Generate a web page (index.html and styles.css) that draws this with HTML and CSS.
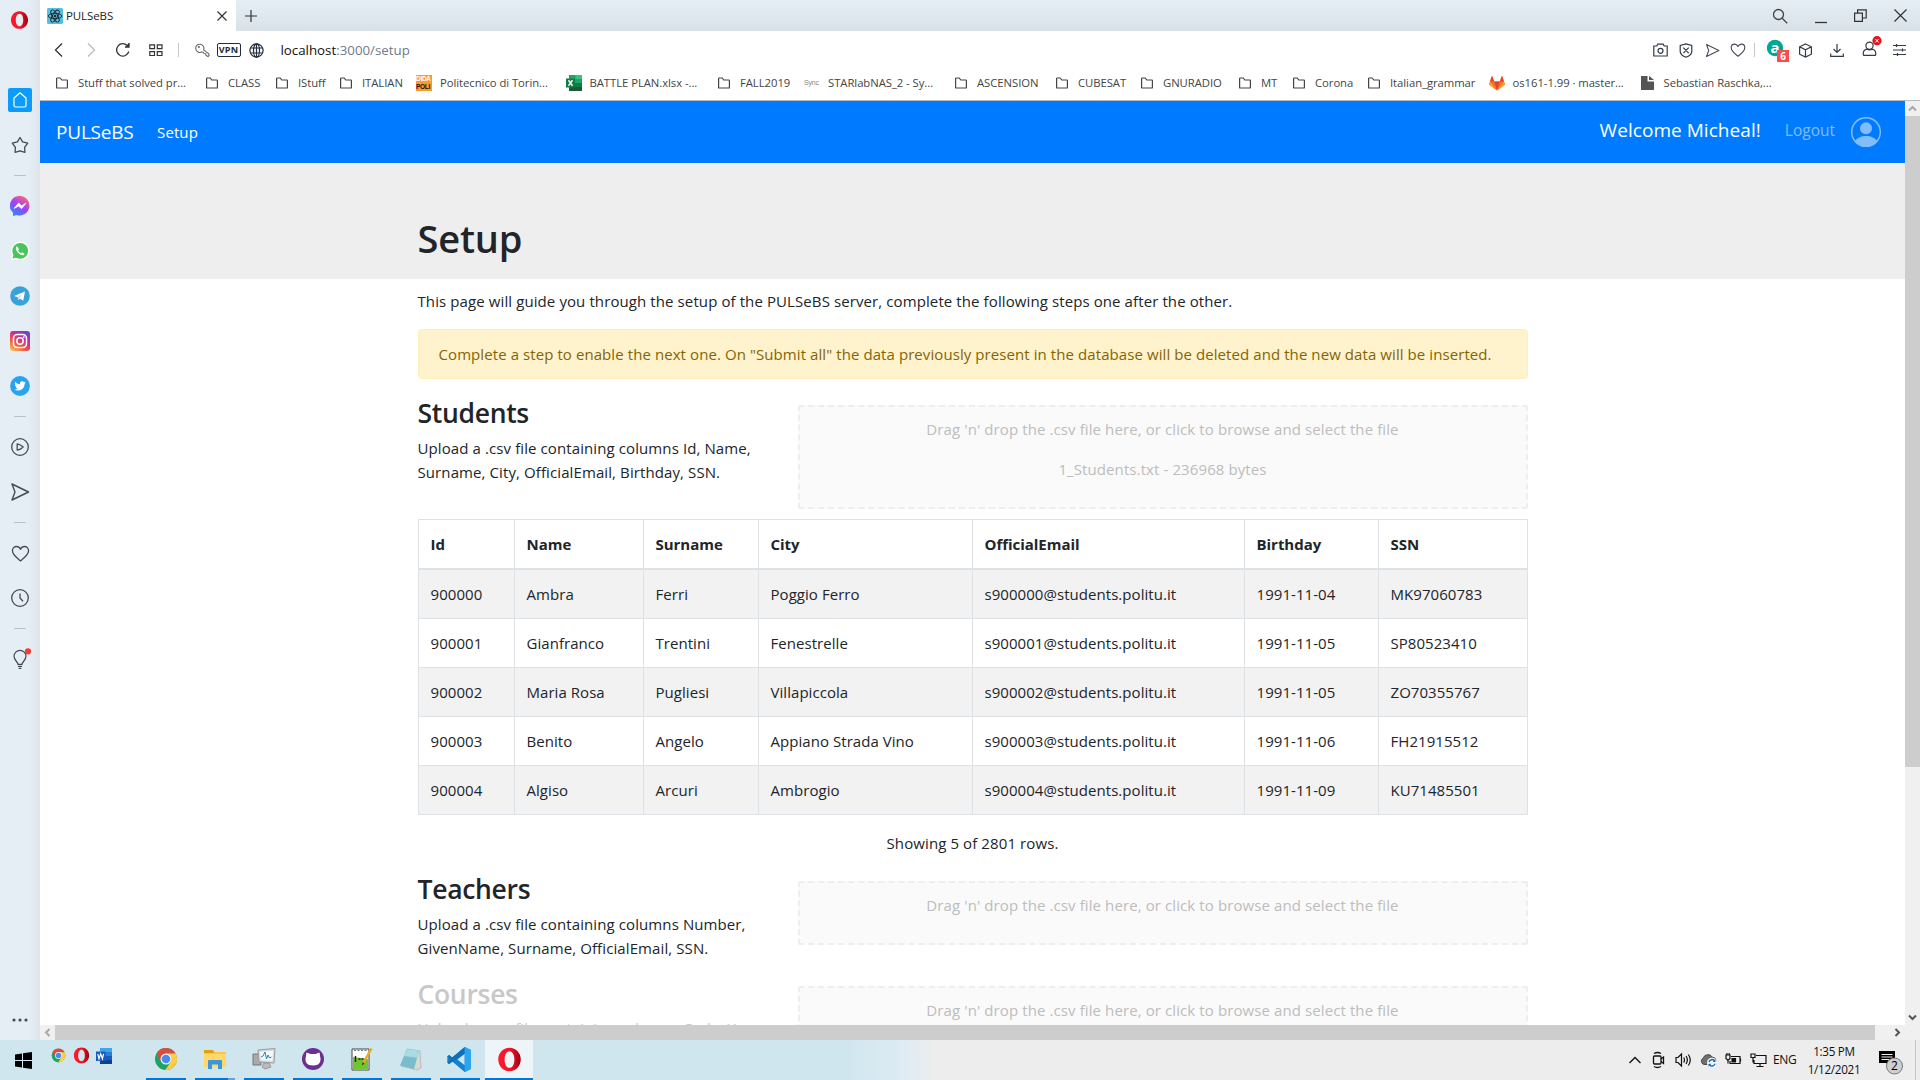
FILE: index.html
```
<!DOCTYPE html>
<html lang="en">
<head>
<meta charset="utf-8">
<title>PULSeBS</title>
<link rel="stylesheet" href="styles.css">
</head>
<body>
<svg class="defs" width="0" height="0">
  <symbol id="folder" viewBox="0 0 12 12"><path d="M.6 10.4V1.6q0-.6.6-.6h3l1.6 2h5q.6 0 .6.6v6.8q0 .6-.6.6H1.2q-.6 0-.6-.6z" fill="none" stroke="#444" stroke-width="1.2"/></symbol>
  <symbol id="chrome" viewBox="0 0 24 24"><circle cx="12" cy="12" r="11" fill="#1da462"/><path d="M12 12 2.5 6.4A11 11 0 0 1 21.6 6.6H12z" fill="#db4b3f"/><path d="M12 6.6h9.6A11 11 0 0 1 11.3 23L17 14.5z" fill="#ffcd45"/><path d="M2.5 6.4 7.2 14.6 12 12V6.6z" fill="#db4b3f"/><circle cx="12" cy="12" r="5.5" fill="#f4f4f4"/><circle cx="12" cy="12" r="4.3" fill="#4a8af4"/></symbol>
  <symbol id="opera" viewBox="0 0 24 24"><defs><linearGradient id="og" x1="0" x2="1"><stop offset="0" stop-color="#ff1b2d"/><stop offset=".55" stop-color="#f01428"/><stop offset="1" stop-color="#9c0010"/></linearGradient></defs><path fill="url(#og)" fill-rule="evenodd" d="M12 .8C5.800.8 1.200 5.800 1.200 12S5.800 23.200 12 23.200 22.800 18.200 22.800 12 18.200.8 12 .8zM12 4c3 0 4.700 3.600 4.700 8s-1.700 8-4.700 8-4.700-3.600-4.700-8S9 4 12 4z"/></symbol>
  <symbol id="send" viewBox="0 0 20 20"><path d="M2 2 18.500 10 2 18l3-8z" fill="none" stroke="#444b57" stroke-width="1.400" stroke-linejoin="round"/></symbol>
  <symbol id="heart" viewBox="0 0 20 20"><path d="M10 17.800C5 14 1.500 11 1.500 7.200 1.500 4.400 3.500 2.600 5.700 2.600c2 0 3.500 1.200 4.300 3 .8-1.800 2.300-3 4.300-3 2.200 0 4.200 1.800 4.200 4.600 0 3.800-3.500 6.800-8.500 10.600z" fill="none" stroke="#444b57" stroke-width="1.400" stroke-linejoin="round"/></symbol>
</svg>
<div class="screen">
  <div class="browser">
    <aside class="sidebar">
      <div class="slot logo"><svg width="19" height="20"><use href="#opera"/></svg></div>
      <div class="slot"><span class="home"><svg width="16" height="18" viewBox="0 0 16 18" fill="none" stroke="#fff" stroke-width="1.200"><path d="M2 7 8 1.800 14 7v7.500q0 1.500-1.500 1.500h-9Q2 16 2 14.500z" stroke-linejoin="round"/></svg></span></div>
      <div class="slot"><svg width="18" height="18" viewBox="0 0 18 18" fill="none" stroke="#444b57" stroke-width="1.300" stroke-linejoin="round"><path d="M9 1.500 11.600 5.800 16.700 7.100 13.600 11.300 13.900 16.300 9 14.800 4.100 16.300 4.400 11.300 1.300 7.100 6.400 5.800z"/></svg></div>
      <hr>
      <div class="slot"><svg width="20" height="20" viewBox="0 0 20 20"><defs><linearGradient id="ms" x1=".2" y1="1" x2=".8" y2="0"><stop offset="0" stop-color="#2090ff"/><stop offset=".5" stop-color="#a040fd"/><stop offset="1" stop-color="#ff6a68"/></linearGradient></defs><path d="M10 0a9.700 9.700 0 1 1-3.300 18.900L3 20v-3.200A9.700 9.700 0 0 1 10 0z" fill="url(#ms)"/><path d="M4.300 12.300 8.500 7.200l3.200 2.700 4-2.500-4.200 5.200-3-2.600z" fill="#fff" stroke="#fff"/></svg></div>
      <div class="slot"><svg width="20" height="20" viewBox="0 0 20 20"><path d="M1 19.300 2.400 14.500A9.200 9.200 0 1 1 6 18z" fill="#fff"/><circle cx="10.200" cy="9.800" r="7.900" fill="#48c65a"/><path d="M2.500 17.600 3.800 13l3.400 3.400z" fill="#48c65a"/><path d="M7 5.300c-2 1.200-1.200 4.400 1.400 6.700 2.700 2.600 5.400 2.900 6.200.9l-2.300-1.700-1.200 1.100c-1.400-.6-2.500-1.700-3-2.900l1-1.200z" fill="#fff"/></svg></div>
      <div class="slot"><svg width="20" height="20" viewBox="0 0 20 20"><circle cx="10" cy="10" r="9.800" fill="#38a3d9"/><path d="M4 9.900 15 5.500 13.200 14.800 9.900 12.500 8.200 14.200 7.700 11.300z" fill="#fff"/><path d="m7.700 11.300 5-3.800-3.600 4.500-.9 2.200z" fill="#b8d8ea"/></svg></div>
      <div class="slot"><svg width="20" height="20" viewBox="0 0 20 20"><defs><linearGradient id="ig" x1=".1" y1="1" x2=".8" y2="0"><stop offset="0" stop-color="#fec053"/><stop offset=".35" stop-color="#f2573f"/><stop offset=".65" stop-color="#c5309a"/><stop offset="1" stop-color="#6a45d0"/></linearGradient></defs><rect width="20" height="20" rx="3" fill="url(#ig)"/><rect x="3.500" y="3.500" width="13" height="13" rx="3.800" fill="none" stroke="#fff" stroke-width="1.500"/><circle cx="10" cy="10" r="3.200" fill="none" stroke="#fff" stroke-width="1.500"/><circle cx="13.800" cy="6.200" r=".9" fill="#fff"/></svg></div>
      <div class="slot"><svg width="20" height="20" viewBox="0 0 20 20"><circle cx="10" cy="10" r="9.900" fill="#2aa3ef"/><path d="M15.800 6.500c-.4.200-.8.300-1.300.4.500-.3.800-.7 1-1.300l-1.500.6a2.300 2.300 0 0 0-4 2.100C8.100 8.200 6.300 7.200 5.200 5.800c-.6 1-.3 2.400.7 3.100l-1-.3c0 1.100.7 2 1.800 2.300l-1 .1c.3.900 1.100 1.500 2.100 1.600-1 .8-2.200 1-3.400 1 4.600 2.600 10.200-.2 10.200-5.800.5-.4.900-.8 1.200-1.300z" fill="#fff"/></svg></div>
      <hr>
      <div class="slot"><svg width="20" height="20" viewBox="0 0 20 20" fill="none" stroke="#444b57" stroke-width="1.300"><circle cx="10" cy="10" r="8.300"/><path d="M7.200 6.800q3.300.6 6 3.200-2.700 2.600-6 3.200z" stroke-linejoin="round"/></svg></div>
      <div class="slot"><svg width="20" height="20"><use href="#send"/></svg></div>
      <hr>
      <div class="slot"><svg width="19" height="19"><use href="#heart"/></svg></div>
      <div class="slot"><svg width="20" height="20" viewBox="0 0 20 20" fill="none" stroke="#444b57" stroke-width="1.300"><circle cx="10" cy="10" r="8.300"/><path d="M10 5.500V10l3 3.300"/></svg></div>
      <hr>
      <div class="slot"><svg width="24" height="22" viewBox="0 0 24 22"><g fill="none" stroke="#444b57" stroke-width="1.200"><path d="M10 16.300c0-2.200-4-4-4-8a6 6 0 0 1 12 0c0 4-4 5.800-4 8z"/><path d="M10 18.300h4M10.700 20.300h2.600"/></g><circle cx="20" cy="3.300" r="3.100" fill="#fc3a30"/></svg></div>
      <div class="slot more"><svg width="16" height="4" viewBox="0 0 16 4" fill="#444b57"><circle cx="2" cy="2" r="1.600"/><circle cx="8" cy="2" r="1.600"/><circle cx="14" cy="2" r="1.600"/></svg></div>
    </aside>
    <div class="window">
      <div class="tabs">
        <div class="tab">
          <svg width="16" height="16" viewBox="0 0 16 16"><rect width="16" height="16" rx="1.500" fill="#53c1de"/><g fill="none" stroke="#20232a" stroke-width=".9"><ellipse cx="8" cy="8" rx="6.800" ry="2.600"/><ellipse cx="8" cy="8" rx="6.800" ry="2.600" transform="rotate(60 8 8)"/><ellipse cx="8" cy="8" rx="6.800" ry="2.600" transform="rotate(120 8 8)"/></g><circle cx="8" cy="8" r="1.300" fill="#20232a"/></svg>
          <span class="tab-title">PULSeBS</span>
          <svg width="10" height="10" viewBox="0 0 10 10" stroke="#333" stroke-width="1.200"><path d="m.5.5 9 9m0-9-9 9"/></svg>
        </div>
        <svg class="plus" width="12" height="12" viewBox="0 0 12 12" stroke="#333" stroke-width="1.200"><path d="M6 0v12M0 6h12"/></svg>
        <div class="controls">
          <svg width="16" height="16" viewBox="0 0 16 16" fill="none" stroke="#444" stroke-width="1.300"><circle cx="6.500" cy="6.500" r="5"/><path d="m10.200 10.200 5 5"/></svg>
          <svg width="12" height="16" viewBox="0 0 12 16"><path d="M0 14.500h12" stroke="#333" stroke-width="1.300"/></svg>
          <svg width="13" height="13" viewBox="0 0 13 13" fill="none" stroke="#333" stroke-width="1.200"><path d="M.6 4.100h7.800v8.300H.6zM3.600 4V.8h8.600v8.200H8.500"/></svg>
          <svg width="13" height="13" viewBox="0 0 13 13" stroke="#333" stroke-width="1.200"><path d="m.5.5 12 12m0-12-12 12"/></svg>
        </div>
      </div>
      <div class="address">
        <div class="nav-icons">
          <svg width="14" height="16" viewBox="0 0 14 16" fill="none" stroke="#333" stroke-width="1.300"><path d="M10 1.500 3.500 8l6.500 6.500"/></svg>
          <svg width="14" height="16" viewBox="0 0 14 16" fill="none" stroke="#bbb" stroke-width="1.300"><path d="M4 1.500 10.500 8 4 14.500"/></svg>
          <svg width="16" height="16" viewBox="0 0 16 16" fill="none" stroke="#333" stroke-width="1.300"><path d="M13.800 9.500a6.200 6.200 0 1 1-1.600-6M14 1v4h-4"/><path d="m10.500 4.500 3.500.5V1z" fill="#333" stroke="none"/></svg>
          <svg width="14" height="14" viewBox="0 0 14 14" fill="none" stroke="#333" stroke-width="1.200"><path d="M.8 1.800h4.700v3.900H.8zM8.300 1.800H13v3.900H8.300zM.8 8.600h4.700v3.900H.8zM8.300 8.600H13v3.900H8.300z"/></svg>
        </div>
        <i class="bar"></i>
        <svg class="key" width="15" height="15" viewBox="0 0 15 15" fill="none" stroke="#666" stroke-width="1.100"><path d="M8.600 6.900A4.100 4.100 0 1 0 6.600 9l1.500.2 1 1.300 1.500.3.500 1.500 1.900 1.300 1.100-1.100-.3-1.600z"/><circle cx="3.900" cy="4" r=".5"/></svg>
        <span class="vpn">VPN</span>
        <svg class="globe" width="15" height="15" viewBox="0 0 15 15" fill="none" stroke="#222c3c" stroke-width="1.200"><circle cx="7.500" cy="7.500" r="6.600"/><ellipse cx="7.500" cy="7.500" rx="3" ry="6.600"/><path d="M1.500 5h12M1.500 10h12M7.500 1v13"/></svg>
        <span class="url">localhost<em>:3000/setup</em></span>
        <div class="tools">
          <svg width="15" height="14" viewBox="0 0 15 14" fill="none" stroke="#333b47" stroke-width="1.200"><path d="M.8 3h3l1-1.800h5.400l1 1.800h3v10H.8z"/><circle cx="7.500" cy="7.800" r="2.500"/></svg>
          <svg width="14" height="15" viewBox="0 0 14 15" fill="none" stroke="#333b47" stroke-width="1.200"><path d="m7 .8 5.800 1.700v6.300Q12 12.500 7 14.200 2 12.500 1.200 8.800V2.500zM4.300 4.700l5.400 5.400M9.700 4.700l-5.400 5.400"/></svg>
          <svg width="15" height="15"><use href="#send"/></svg>
          <svg width="16" height="16"><use href="#heart"/></svg>
          <i class="bar"></i>
          <svg class="ext" width="24" height="26" viewBox="0 0 24 26"><circle cx="9" cy="11" r="8.200" fill="#00a698"/><text x="9" y="16" text-anchor="middle" class="amz">a</text><rect x="11" y="13" width="12" height="12" fill="#ff4b4b"/><text x="17" y="22.500" text-anchor="middle" class="cnt">6</text></svg>
          <svg width="15" height="15" viewBox="0 0 15 15" fill="none" stroke="#333b47" stroke-width="1.200"><path d="m7.500 1 5.900 2.800v7.400l-5.900 2.900-5.900-2.900V3.800zM1.600 3.800l5.900 3 5.900-3M7.500 6.800V14"/></svg>
          <svg width="14" height="14" viewBox="0 0 14 14" fill="none" stroke="#333b47" stroke-width="1.200"><path d="M7 1v8.500M3.500 6 7 9.500 10.500 6M.7 10.500v2.800h12.600v-2.800"/></svg>
          <svg class="person" width="22" height="24" viewBox="0 0 22 24" fill="none" stroke="#333b47" stroke-width="1.200"><circle cx="9.500" cy="9.800" r="3.600"/><path d="M3.300 18.800v-1.500q0-3.300 3.500-4.200 2.700 1.400 5.400 0 3.500.9 3.500 4.200v1.500q0 .6-.7.600H4q-.7 0-.7-.6z"/><circle cx="17" cy="4.700" r="4.600" fill="#e0131e" stroke="none"/><path d="m15.200 2.900 3.600 3.600m0-3.600-3.600 3.600" stroke="#fff" stroke-width="1"/></svg>
          <svg width="13" height="12" viewBox="0 0 13 12" stroke="#333b47" stroke-width="1.200"><path d="M0 1.500h13M0 6h13M0 10.500h13M3.500 0v3M9.500 4.500v3M4.500 9v3"/></svg>
        </div>
      </div>
      <div class="bookmarks">
        <span><svg><use href="#folder"/></svg><b>Stuff that solved pr...</b></span>
        <span><svg><use href="#folder"/></svg><b>CLASS</b></span>
        <span><svg><use href="#folder"/></svg><b>IStuff</b></span>
        <span><svg><use href="#folder"/></svg><b>ITALIAN</b></span>
        <span class="site"><i class="poli"><s>DIDA</s><u>POLI</u></i><b>Politecnico di Torin...</b></span>
        <span class="site"><svg viewBox="0 0 16 16"><path d="M3 0h13v16H3z" fill="#21a366"/><path d="M9.500 0H16v4H9.500z" fill="#33c481"/><path d="M3 8h13v8H3z" fill="#107c41"/><path d="M3 12h13v4H3z" fill="#185c37"/><path d="M0 3.500h9v9H0z" fill="#107c41"/><path d="m2.500 5.300 4 5.400M6.500 5.300l-4 5.400" stroke="#fff" stroke-width="1.500"/></svg><b>BATTLE PLAN.xlsx -...</b></span>
        <span><svg><use href="#folder"/></svg><b>FALL2019</b></span>
        <span class="site"><i class="sync">Sync</i><b>STARlabNAS_2 - Sy...</b></span>
        <span><svg><use href="#folder"/></svg><b>ASCENSION</b></span>
        <span><svg><use href="#folder"/></svg><b>CUBESAT</b></span>
        <span><svg><use href="#folder"/></svg><b>GNURADIO</b></span>
        <span><svg><use href="#folder"/></svg><b>MT</b></span>
        <span><svg><use href="#folder"/></svg><b>Corona</b></span>
        <span><svg><use href="#folder"/></svg><b>Italian_grammar</b></span>
        <span class="site"><svg viewBox="0 0 16 16"><path d="M8 15.500 0 9.500 3 .8l2.200 5.700h5.600L13 .8l3 8.700z" fill="#fc6d26"/><path d="M8 15.500 5.200 6.500h5.600z" fill="#e24329"/><path d="M3 .8 5.200 6.500H1zM13 .8l-2.200 5.700H15z" fill="#e24329"/><path d="m0 9.500 1-3 7 9zM16 9.500l-1-3-7 9z" fill="#fca326"/></svg><b>os161-1.99 · master...</b></span>
        <span class="site"><svg viewBox="0 0 16 16"><path d="M1 1h6.500v5.500H14V15H1z" fill="#555"/><path d="M9 .8 14 5H9z" fill="#555"/></svg><b>Sebastian Raschka,...</b></span>
      </div>
      <div class="viewport">
        <main class="page">
          <nav class="navbar">
            <span class="brand">PULSeBS</span>
            <span class="link">Setup</span>
            <span class="welcome">Welcome Micheal!</span>
            <span class="logout">Logout</span>
            <svg width="30" height="30" viewBox="0 0 30 30"><circle cx="15" cy="15" r="14.300" fill="none" stroke="#80bdff" stroke-width="1.500"/><circle cx="15" cy="11.300" r="6" fill="#80bdff"/><path d="M3.500 24.500C5.500 21 10 19 15 19s9.500 2 11.500 5.500C24 28 20 30 15 30S6 28 3.500 24.500z" fill="#80bdff"/></svg>
          </nav>
          <header class="jumbotron"><h1>Setup</h1></header>
          <div class="container">
            <p class="intro">This page will guide you through the setup of the PULSeBS server, complete the following steps one after the other.</p>
            <div class="alert">Complete a step to enable the next one. On "Submit all" the data previously present in the database will be deleted and the new data will be inserted.</div>
            <section class="step">
              <div class="info"><h3>Students</h3><p>Upload a .csv file containing columns Id, Name,<br>Surname, City, OfficialEmail, Birthday, SSN.</p></div>
              <div class="drop"><p>Drag 'n' drop the .csv file here, or click to browse and select the file</p><p class="file">1_Students.txt - 236968 bytes</p></div>
            </section>
            <table>
              <colgroup><col class="c1"><col class="c2"><col class="c3"><col class="c4"><col class="c5"><col class="c6"><col class="c7"></colgroup>
              <thead><tr><th>Id</th><th>Name</th><th>Surname</th><th>City</th><th>OfficialEmail</th><th>Birthday</th><th>SSN</th></tr></thead>
              <tbody>
                <tr><td>900000</td><td>Ambra</td><td>Ferri</td><td>Poggio Ferro</td><td>s900000@students.politu.it</td><td>1991-11-04</td><td>MK97060783</td></tr>
                <tr><td>900001</td><td>Gianfranco</td><td>Trentini</td><td>Fenestrelle</td><td>s900001@students.politu.it</td><td>1991-11-05</td><td>SP80523410</td></tr>
                <tr><td>900002</td><td>Maria Rosa</td><td>Pugliesi</td><td>Villapiccola</td><td>s900002@students.politu.it</td><td>1991-11-05</td><td>ZO70355767</td></tr>
                <tr><td>900003</td><td>Benito</td><td>Angelo</td><td>Appiano Strada Vino</td><td>s900003@students.politu.it</td><td>1991-11-06</td><td>FH21915512</td></tr>
                <tr><td>900004</td><td>Algiso</td><td>Arcuri</td><td>Ambrogio</td><td>s900004@students.politu.it</td><td>1991-11-09</td><td>KU71485501</td></tr>
              </tbody>
            </table>
            <p class="count">Showing 5 of 2801 rows.</p>
            <section class="step">
              <div class="info"><h3>Teachers</h3><p>Upload a .csv file containing columns Number,<br>GivenName, Surname, OfficialEmail, SSN.</p></div>
              <div class="drop"><p>Drag 'n' drop the .csv file here, or click to browse and select the file</p></div>
            </section>
            <section class="step disabled">
              <div class="info"><h3>Courses</h3><p>Upload a .csv file containing columns Code, Year,</p></div>
              <div class="drop"><p>Drag 'n' drop the .csv file here, or click to browse and select the file</p></div>
            </section>
          </div>
        </main>
        <div class="vscroll">
          <svg width="9" height="7" viewBox="0 0 9 7" fill="none" stroke="#a8a8a8" stroke-width="2"><path d="m1 5.500 3.500-3.500L8 5.500"/></svg>
          <i></i>
          <svg class="down" width="9" height="7" viewBox="0 0 9 7" fill="none" stroke="#555" stroke-width="2"><path d="m1 1.500 3.500 3.500L8 1.500"/></svg>
        </div>
        <div class="hscroll">
          <svg width="15" height="9" viewBox="0 0 15 9" fill="none" stroke="#a8a8a8" stroke-width="2"><path d="M9.500 1 6 4.500 9.500 8"/></svg>
          <i></i>
          <svg class="right" width="7" height="9" viewBox="0 0 7 9" fill="none" stroke="#555" stroke-width="2"><path d="M1.500 1 5 4.500 1.500 8"/></svg>
        </div>
        <div class="corner"></div>
      </div>
    </div>
  </div>
  <footer class="taskbar">
    <div class="start"><svg width="17" height="17" viewBox="0 0 17 17"><path d="M0 2.500 7 1.500v6.500H0zM8 1.300 17 0v8H8zM0 9h7v6.500l-7-1zM8 9h9v8l-9-1.300z"/></svg></div>
    <div class="quick">
      <svg width="15" height="15"><use href="#chrome"/></svg>
      <svg width="17" height="17"><use href="#opera"/></svg>
      <svg width="16" height="16" viewBox="0 0 16 16"><path d="M4 0h12v16H4z" fill="#2b7cd3"/><path d="M4 0h12v4H4z" fill="#41a5ee"/><path d="M4 8h12v4H4z" fill="#185abd"/><path d="M4 12h12v4H4z" fill="#103f91"/><path d="M0 3.500h9.500v9.500H0z" fill="#185abd"/><path d="m1.800 5.800 1.200 5 1.700-5 1.700 5 1.200-5" fill="none" stroke="#fff" stroke-width="1.200"/></svg>
    </div>
    <div class="apps">
      <div><svg width="24" height="24"><use href="#chrome"/></svg></div>
      <div class="multi"><svg width="24" height="24" viewBox="0 0 24 24"><path d="M1 3h9l2 2h11v15H1z" fill="#f9c64b"/><path d="M1 3h9l1 3H1z" fill="#dfa012"/><path d="M1 7h22v13H1z" fill="#ffd869"/><path d="M5 22v-8q0-1 1-1h12q1 0 1 1v8h-4v-4.500H9V22z" fill="#3a96dd"/></svg></div>
      <div><svg width="24" height="24" viewBox="0 0 24 24"><path d="M1 7h8v11H1z" fill="#aaa" stroke="#777"/><path d="M6 3 23 1.500 22 16 7 15z" fill="#d9dcdf" stroke="#999"/><path d="m8 5 13-1.200-.7 10L9 13z" fill="#f6fbff"/><path d="m9 10 2-1 2-4 1.500 7L16 8l1.500 3 2-1" fill="none" stroke="#2c83b8"/><path d="M12 16h5l2 4-6 2-3-2z" fill="#bbb" stroke="#999"/></svg></div>
      <div><svg width="24" height="24" viewBox="0 0 24 24"><circle cx="12" cy="12" r="11" fill="#6b2e91"/><path d="M5.500 5.500 9.500 7h5l4-1.500.6 4q1 2.500 0 5.500-1.600 3.500-7.100 3.500T4.900 15q-1-3 0-5.500z" fill="#fff"/></svg></div>
      <div><svg width="24" height="24" viewBox="0 0 24 24"><path d="M2 2h17v21H2z" fill="#fff" stroke="#444"/><path d="M3 10 18 12v10H3z" fill="#70c62f"/><path d="M4 3.500h2m1.500 0h2m1.500 0h2m1.500 0h2" stroke="#777" stroke-width="1"/><path d="M5.500 9v6m3-3h2m1 0h2" stroke="#222" stroke-width="1.500"/><path d="m21.500 1.500-8.500 15" stroke="#e9a92c" stroke-width="2.500"/><path d="m12.500 15-.5 3.500 2.500-2z" fill="#333"/></svg></div>
      <div><svg width="24" height="24" viewBox="0 0 24 24"><path d="m8 2 13 2 1 17-4 2L2 19z" fill="#d9d9cf" stroke="#aaa" stroke-width=".7"/><path d="m8 2 12 1.800L15 22 1 18.500z" fill="#79bccb"/><path d="m8 2 12 1.800-2 7L5 9z" fill="#a9dbe3"/></svg></div>
      <div><svg width="25" height="25" viewBox="0 0 24 24"><path d="m17 0 6 2.800v18.400L17 24 5 14l-3 2.300L.3 15V9L2 7.700 5 10zM17 6.500 10 12l7 5.500z" fill="#1481cf" fill-rule="evenodd"/><path d="m.3 9 3.200 3L.3 15l1.700 1.300L17 6.500V0L5 10 2 7.700z" fill="#0f70b8"/><path d="m17 0 6 2.800v18.400L17 24z" fill="#29a6f2"/></svg></div>
      <div class="active"><svg width="25" height="25"><use href="#opera"/></svg></div>
    </div>
    <div class="tray">
      <svg width="14" height="14" viewBox="0 0 14 14" fill="none" stroke="#111" stroke-width="1.300"><path d="m1.500 10 5.500-5.500L12.500 10"/></svg>
      <svg width="14" height="18" viewBox="0 0 14 18" fill="none" stroke="#111" stroke-width="1.300"><rect x="2" y="5" width="7.500" height="8" rx="1"/><path d="m9.500 8 2.500-2v6.500l-2.500-2M2.500 2.500Q6 .5 9.500 2.500M2.500 15.500q3.500 2 7 0"/></svg>
      <svg width="17" height="16" viewBox="0 0 17 16" fill="none" stroke="#111" stroke-width="1.200"><path d="M1 5.500h2L6.500 2v12L3 10.500H1zM8.700 5.500q1.600 2.500 0 5M11 4q2.800 4 0 8M13.300 2.500q4 5.500 0 11"/></svg>
      <svg width="17" height="16" viewBox="0 0 17 16"><path d="M4 12.500a3.500 3.500 0 0 1-.8-6.500 5 5 0 0 1 9-1q3.500.3 4 4v3.500z" fill="#6e6e6e" stroke="#333" stroke-width=".8"/><circle cx="12" cy="10.800" r="5" fill="#fff"/><path d="M9 10a3.200 3.200 0 0 1 5.500-1.300M15 11.600a3.200 3.200 0 0 1-5.500 1.300" fill="none" stroke="#1466c4" stroke-width="1.500"/><path d="M15.500 7v3h-3zM8.500 14.700v-3h3z" fill="#1466c4"/></svg>
      <svg width="17" height="16" viewBox="0 0 17 16" fill="none" stroke="#111" stroke-width="1.200"><path d="M6 4.500h9v7H5V9M15.500 6.500v3M1 3h4v3.500L3 8.500 1 6.500zM2 1v2M4.200 1v2M3 8.500v3"/><path d="M7 6.500h3.500v3.500H7z" fill="#111"/></svg>
      <svg width="17" height="16" viewBox="0 0 17 16" fill="none" stroke="#111" stroke-width="1.200"><path d="M6 3.500h10v8H4V8M10 11.500v3M6.500 14.500h7M1 2h4v3.500H1zM3 5.500v5"/></svg>
      <span class="lang">ENG</span>
      <span class="clock">1:35 PM<br>1/12/2021</span>
      <svg class="notif" width="26" height="26" viewBox="0 0 26 26"><path d="M1 2h16v12h-5v4l-4-4H1z" fill="#000"/><path d="M3.500 5.500h11M3.500 8h11M3.500 10.500h8" stroke="#eee" stroke-width="1.200"/><circle cx="16.500" cy="17" r="8" fill="#cfcfcf" stroke="#777"/><text x="16.500" y="21" text-anchor="middle">2</text></svg>
      <i class="peek"></i>
    </div>
  </footer>
</div>
</body>
</html>
```
FILE: styles.css
```
* { box-sizing: border-box; }
body { margin: 0; font-family: "Open Sans", "Noto Sans", sans-serif; font-size: 15px; line-height: 24px; color: #212529; background: #fff; }
svg { display: block; flex: none; }
.defs { position: absolute; }
i, em { font-style: normal; }
.screen { width: 1920px; height: 1080px; display: flex; flex-direction: column; overflow: hidden; }
.browser { height: 1040px; display: flex; }

.sidebar { width: 40px; flex: none; display: flex; flex-direction: column; align-items: center; background: linear-gradient(90deg, #e5edf5 70%, #dde4ec); }
.slot { height: 45px; flex: none; display: flex; align-items: center; justify-content: center; }
.slot.logo { height: 39px; margin: 0 1px 38.500px 0; }
.slot.more { margin-top: auto; height: 40px; }
.sidebar hr { width: 12px; height: 1px; border: 0; background: #b3c3d0; margin: 7.500px 0; flex: none; }
.home { width: 24px; height: 24px; border-radius: 2px; background: #0a9bfb; display: flex; align-items: center; justify-content: center; }

.window { flex: 1; min-width: 0; display: flex; flex-direction: column; }
.tabs { height: 31px; display: flex; align-items: center; background: linear-gradient(#e5edf5, #d9e1e9); }
.tab { width: 196px; height: 31px; padding: 0 9px 0 7px; display: flex; align-items: center; background: #fff; font-size: 11.500px; color: #222; }
.tab-title { flex: 1; margin-left: 3px; letter-spacing: -.1px; }
.plus { margin-left: 9px; }
.controls { margin-left: auto; margin-right: 13px; display: flex; align-items: center; gap: 27px; }
.address { height: 38px; display: flex; align-items: center; }
.nav-icons { display: flex; align-items: center; gap: 17.500px; margin-left: 12px; }
.bar { width: 1px; height: 14px; background: #c8c8c8; }
.nav-icons + .bar { margin-left: 15px; }
.key { margin-left: 16px; }
.vpn { width: 24px; height: 14px; margin-left: 7px; border: 1px solid #222c3c; border-radius: 2px; font: bold 9px/12px "Open Sans", sans-serif; text-align: center; letter-spacing: .3px; color: #222c3c; }
.globe { margin-left: 8px; }
.url { margin-left: 17px; font-size: 13.300px; color: #111; }
.url em { color: #6f7b88; }
.tools { margin-left: auto; margin-right: 5px; display: grid; grid-template-columns: 26px 26px 26px 26px 7px 32px 30px 34px 30px 31px; align-items: center; justify-items: center; }
.ext { margin-left: 8px; }
.amz { font: bold 15px "Open Sans", sans-serif; fill: #fff; }
.cnt { font: bold 10px "Open Sans", sans-serif; fill: #fff; }
.person { margin: -4px 0 0 3px; }
.bookmarks { height: 32px; padding: 0 0 4px 16px; border-bottom: 1px solid #b5bcc4; display: grid; grid-template-columns: 150px 70px 64px 74px 149.500px 154.500px 84px 153px 101px 85px 98px 54px 75px 118.500px 151px 140px; align-items: center; font-size: 11.300px; letter-spacing: -.05px; color: #444; }
.bookmarks span { display: flex; align-items: center; white-space: nowrap; }
.bookmarks b { font-weight: 400; margin-left: 10px; }
.bookmarks svg { width: 12px; height: 12px; }
.bookmarks .site svg { width: 16px; height: 16px; }
.bookmarks .site { margin-left: 2px; }
.bookmarks .site b { margin-left: 8px; }
.poli { width: 16px; height: 16px; overflow: hidden; background: #fb9a2e; font: bold 6.500px/8px "Liberation Sans", sans-serif; letter-spacing: -.3px; }
.poli s, .poli u { display: block; text-decoration: none; color: #fff; }
.poli u { color: #111; }
.sync { width: 16px; font: 7px/16px "Liberation Sans", sans-serif; color: #888; letter-spacing: -.2px; }

.viewport { height: 939px; display: grid; grid-template: 924px 15px / 1865px 15px; }
.page { overflow: hidden; }
.navbar { height: 62px; padding: 0 24px 0 16px; display: flex; align-items: center; background: #007bff; color: #fff; }
.brand { font-size: 19px; letter-spacing: -.2px; }
.link { margin-left: 23.500px; letter-spacing: .1px; }
.welcome { margin-left: auto; font-size: 19px; letter-spacing: .05px; margin-top: -4px; }
.logout { margin: -5px 16px 0 24px; font-size: 15.500px; color: #80bdff; }
.jumbotron { height: 116px; padding: 51px 0 0 377.500px; background: #eee; }
h1, h3, p { margin: 0; }
h1 { font-size: 38px; line-height: 48px; font-weight: 600; letter-spacing: -.2px; }
.container { width: 1110px; margin: 10px auto 0; letter-spacing: .1px; }
.alert { height: 50px; margin: 16px 0; padding: 12px 20px; border: 1px solid #ffeeba; border-radius: 4px; background: #fff3cd; color: #856404; white-space: nowrap; letter-spacing: .08px; }
.step { display: flex; justify-content: space-between; align-items: flex-start; }
.info { white-space: nowrap; width: 350px; }
.info p { margin-bottom: 16px; }
h3 { font-size: 26.500px; line-height: 37px; font-weight: 600; letter-spacing: -.3px; margin-bottom: 3.600px; }
.drop { width: 730px; margin: 10px 0; padding: 10px; border: 2px dashed #eee; border-radius: 2px; background: #fafafa; color: #bdbdbd; text-align: center; }
.step:not(:first-of-type) .drop { margin-bottom: 0; }
.drop p { margin-bottom: 16px; }
.disabled { color: #c8c8c8; }
table { width: 1110.500px; table-layout: fixed; border-collapse: collapse; border: 1px solid #dee2e6; margin-bottom: 16px; letter-spacing: .05px; }
.c1 { width: 96px; } .c2 { width: 129px; } .c3 { width: 115px; } .c4 { width: 214px; } .c5 { width: 272px; } .c6 { width: 134px; }
th, td { padding: 12px; text-align: left; border: 1px solid #dee2e6; white-space: nowrap; }
th { font-weight: 700; border-bottom-width: 2px; letter-spacing: -.03px; }
tbody tr:nth-child(odd) { background: #f2f2f2; }
.count { text-align: center; margin-bottom: 16px; }

.vscroll { background: #f0f0f0; display: flex; flex-direction: column; align-items: center; padding-top: 4px; }
.vscroll i { width: 15px; height: 651px; margin-top: 4px; background: #cdcdcd; }
.vscroll .down { margin: auto 0 4px; }
.hscroll { background: #f0f0f0; display: flex; align-items: center; }
.hscroll i { width: 1820px; height: 15px; background: #cdcdcd; }
.hscroll .right { margin-left: auto; margin-right: 4px; }
.corner { background: #f0f0f0; }

.taskbar { height: 40px; display: flex; color: #111; background: linear-gradient(90deg, #cfe6ee 0, #cfe6ee 840px, #dcebf4 900px, #ededed 935px); }
.start { width: 47px; display: flex; align-items: center; justify-content: center; }
.quick { display: flex; align-items: center; gap: 6.500px; height: 31px; margin-left: 4px; width: 90px; }
.apps { display: flex; }
.apps div { width: 40px; height: 40px; margin: 0 4.500px; display: flex; align-items: center; justify-content: center; border-bottom: 2px solid #0078d7; }
.apps .multi { border-image: linear-gradient(90deg, #0078d7 80%, #5ba5e0 80%) 1; border-width: 0 0 2px; }
.apps .active { width: 48px; margin-left: 1px; background: #edf5f9; }
.tray { margin-left: auto; display: flex; align-items: center; }
.tray svg { margin: 0 4px; width: 17px; }
.tray svg:first-child { width: 14px; }
.lang { font-size: 12px; letter-spacing: -.4px; width: 30px; margin-left: 2px; }
.clock { font-size: 11.700px; line-height: 18.500px; text-align: center; width: 62px; letter-spacing: -.3px; }
.tray .notif { width: 26px; margin: 3px 11px 0 13px; }
.notif text { font: 12px "Open Sans", sans-serif; }
.peek { width: 1px; height: 40px; background: #c4c4c4; margin-right: 4px; }
```
